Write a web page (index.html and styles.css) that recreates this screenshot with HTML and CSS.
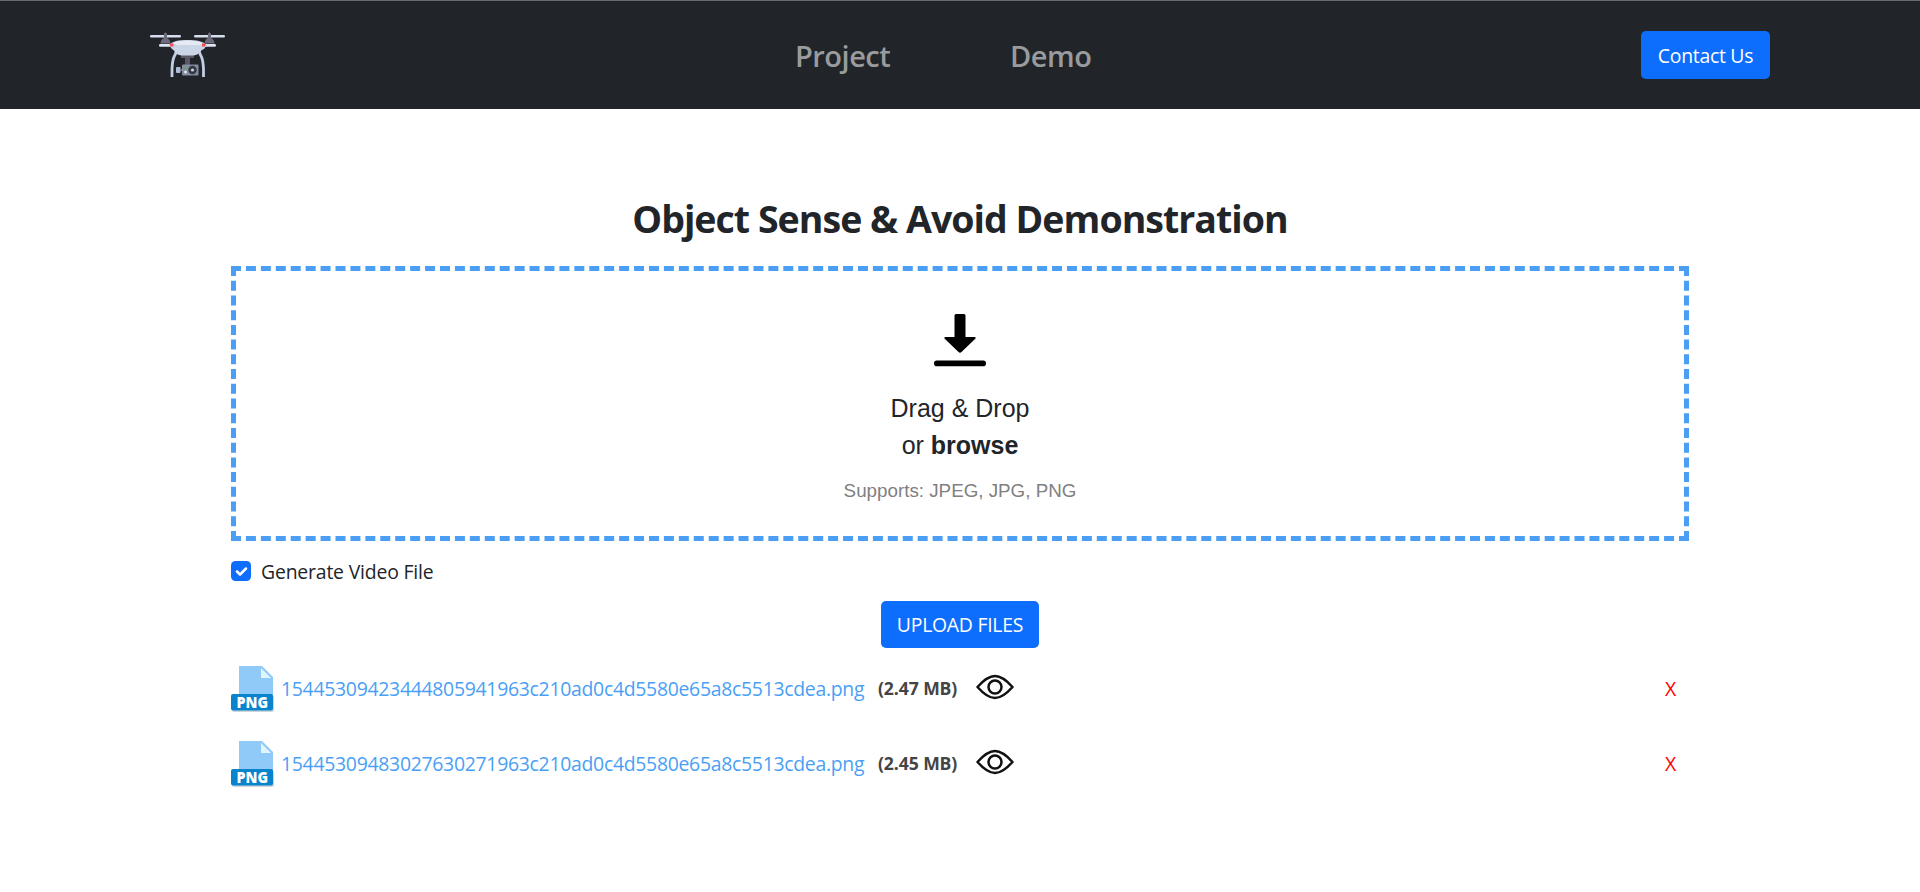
FILE: index.html
```html
<!DOCTYPE html>
<html lang="en">
<head>
<meta charset="utf-8">
<title>Object Sense &amp; Avoid</title>
<link rel="stylesheet" href="styles.css">
</head>
<body>
<header class="navbar">
  <a class="logo">
    <svg width="76" height="46" viewBox="0 0 76 46">
      <path d="M26.500 18q-.5 4-2.500 7-1.500 3-2 12v8M49 18q.5 4 2.500 7 1.500 3 2 12v8" fill="none" stroke="#c3cee3" stroke-width="2.800"/>
      <rect x="0" y="3" width="31" height="2.600" rx="1.300" fill="#d5dcec"/>
      <rect x="44" y="3" width="31" height="2.600" rx="1.300" fill="#d5dcec"/>
      <path d="M14 1.500q1.500-2 3 0V6q3 1 3.500 5.500h-10Q11 7 14 6zM58 1.500q1.500-2 3 0V6q3 1 3.500 5.500h-10Q55 7 58 6z" fill="#6b6b7c"/>
      <rect x="9" y="12" width="57" height="2.800" rx="1.400" fill="#dce3f2"/>
      <path d="M31 22.500h13v3.500h-4V33h-5v-7h-4z" fill="#5a5867"/>
      <path d="M19 13c4-4 9-5 18.500-5S52 9 57 13l-3 4q-3 1-4 3c-3 4-7 3.500-12.500 3.500S28 24 25 20q-1-2-3-3z" fill="#cbd5e8"/>
      <path d="M23 11c4-3 24-3 30 0l-3 2H27z" fill="#e5eaf5"/>
      <path d="M19.500 11.500h4v3h-3zM56 11.500h-4v3h3z" fill="#f34d52"/>
      <rect x="26" y="35" width="4.500" height="6" rx="1" fill="#aebdd6"/><rect x="30" y="37" width="3" height="2" fill="#79798a"/>
      <rect x="32" y="32.500" width="16.500" height="11" rx="1" fill="#858ca0"/>
      <circle cx="42.500" cy="38" r="4.200" fill="#353743"/><circle cx="42.500" cy="38" r="1.600" fill="#c9d4e8"/>
      <rect x="34" y="35" width="3" height="2" fill="#6d9b77"/><circle cx="35.500" cy="40" r="1.500" fill="#dde4ef"/>
    </svg>
  </a>
  <nav class="links">
    <a class="link project">Project</a>
    <a class="link demo">Demo</a>
  </nav>
  <button class="btn contact">Contact Us</button>
</header>
<main class="content">
  <h1 class="title">Object Sense &amp; Avoid Demonstration</h1>
  <section class="dropzone">
    <svg class="download" width="54" height="54" viewBox="0 0 54 54">
      <path d="M23 1h8q1.500 0 1.500 1.500V24h9q2 0 .8 1.700L28.500 39q-1.500 1.500-3 0L11.700 25.700Q10.500 24 12.500 24h9V2.500Q21.500 1 23 1z"/>
      <rect x="1" y="47.600" width="52" height="5.600" rx="2.800"/>
    </svg>
    <p class="drop-text">Drag &amp; Drop</p>
    <p class="drop-text">or <b>browse</b></p>
    <p class="supports">Supports: JPEG, JPG, PNG</p>
  </section>
  <label class="check">
    <svg width="20" height="20" viewBox="0 0 20 20"><rect width="20" height="20" rx="4.500" fill="#0d6efd"/><path d="M6 10.500l3 3 6-6" fill="none" stroke="#fff" stroke-width="2.500" stroke-linecap="round" stroke-linejoin="round"/></svg>
    <span class="check-text">Generate Video File</span>
  </label>
  <button class="btn upload">UPLOAD FILES</button>
  <ul class="files">
    <li class="file">
      <svg class="file-icon" viewBox="0 0 44 48">
        <path d="M8 0h23l11 11v20H8z" fill="#90caf9"/>
        <path d="M30 2l10 10H30z" fill="#e1f5fe"/>
        <rect x="1" y="29.500" width="42" height="16.500" rx="2" fill="#90a4ae" opacity=".45"/>
        <rect x="0" y="28" width="42" height="16.500" rx="2" fill="#0883cd"/>
        <text x="5.500" y="42" class="file-tag" textLength="31.500" lengthAdjust="spacingAndGlyphs">PNG</text>
      </svg>
      <a class="name">15445309423444805941963c210ad0c4d5580e65a8c5513cdea.png</a>
      <b class="size">(2.47 MB)</b>
      <svg class="eye" viewBox="0 0 38 26">
        <path d="M1.500 13C9 4.500 14 2 19 2s10 2.500 17.500 11C29 21.500 24 24 19 24S9 21.500 1.500 13z"/>
        <circle cx="19" cy="13" r="6.500"/>
      </svg>
      <span class="remove">X</span>
    </li>
    <li class="file">
      <svg class="file-icon" viewBox="0 0 44 48">
        <path d="M8 0h23l11 11v20H8z" fill="#90caf9"/>
        <path d="M30 2l10 10H30z" fill="#e1f5fe"/>
        <rect x="1" y="29.500" width="42" height="16.500" rx="2" fill="#90a4ae" opacity=".45"/>
        <rect x="0" y="28" width="42" height="16.500" rx="2" fill="#0883cd"/>
        <text x="5.500" y="42" class="file-tag" textLength="31.500" lengthAdjust="spacingAndGlyphs">PNG</text>
      </svg>
      <a class="name">15445309483027630271963c210ad0c4d5580e65a8c5513cdea.png</a>
      <b class="size">(2.45 MB)</b>
      <svg class="eye" viewBox="0 0 38 26">
        <path d="M1.500 13C9 4.500 14 2 19 2s10 2.500 17.500 11C29 21.500 24 24 19 24S9 21.500 1.500 13z"/>
        <circle cx="19" cy="13" r="6.500"/>
      </svg>
      <span class="remove">X</span>
    </li>
  </ul>
</main>
</body>
</html>
```
FILE: styles.css
```css
* { box-sizing: border-box; }
body { margin: 0; background: #fff; color: #212529; font-family: "Open Sans", "Noto Sans", sans-serif; font-size: 19.4px; letter-spacing: -.28px; line-height: 30px; }
svg { display: block; flex: none; }
.navbar { display: flex; height: 109px; padding: 0 150px; background: #212529; border-top: 1px solid #666b6e; }
.logo { width: 645px; padding-top: 31px; }
.links { display: flex; flex: 1; padding-top: 34px; }
.link { color: #999b9d; font-size: 29px; font-weight: 600; letter-spacing: -.5px; line-height: 42px; white-space: nowrap; }
.project { width: 215px; }
.btn { display: block; border: 0; border-radius: 5px; background: #0d6efd; color: #fff; font: 19.4px/30px "Open Sans", "Noto Sans", sans-serif; letter-spacing: -.28px; padding: 0; white-space: nowrap; }
.contact { width: 129px; height: 48px; margin-top: 30px; padding-top: 1px; }
.content { width: 1458px; margin: 0 auto; padding-top: 86px; }
.title { margin: 0 0 23px; height: 48px; font-size: 37.5px; font-weight: 700; letter-spacing: -.97px; line-height: 47px; text-align: center; white-space: nowrap; }
.dropzone { height: 275px; border: 5px dashed #4a9ff5; display: flex; flex-direction: column; align-items: center; padding-top: 42px; font-family: "Liberation Sans", Arial, sans-serif; letter-spacing: 0; }
.download { margin-bottom: 23px; }
.drop-text { margin: 0; font-size: 25px; line-height: 37px; }
.supports { margin: 12px 0 0; font-size: 18.8px; line-height: 30px; color: #808080; }
.check { display: flex; gap: 10px; align-items: center; height: 30px; margin-top: 15px; }
.check-text { padding-top: 1px; letter-spacing: -.18px; }
.upload { width: 158px; height: 47px; margin: 15px auto 0; letter-spacing: -.25px; }
.files { list-style: none; margin: 18px 0 0; padding: 0; }
.file { display: flex; height: 75px; line-height: 46px; }
.file-icon { width: 44px; height: 48px; margin-right: 6px; }
.file-tag { font: 800 15px "Open Sans", sans-serif; letter-spacing: 0; fill: #fff; }
.name { width: 597px; color: #4a9ff5; white-space: nowrap; }
.size { width: 98px; color: #444; font-size: 17.6px; letter-spacing: -.1px; line-height: 45px; white-space: nowrap; }
.eye { width: 38px; height: 26px; margin-top: 8px; fill: none; stroke: #111; stroke-width: 2.5; stroke-linejoin: round; }
.remove { margin-left: auto; margin-right: 13px; color: #f00; }
```
